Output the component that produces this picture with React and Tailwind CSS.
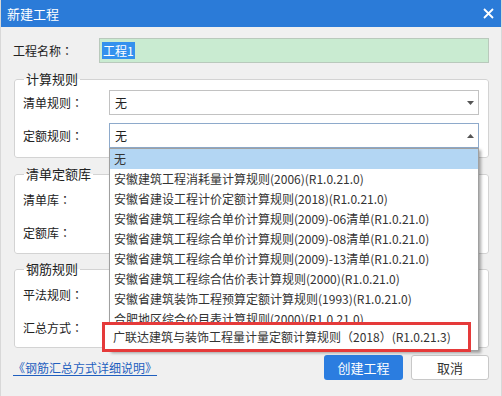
import React from 'react';

const rules = [
  '无',
  '安徽建筑工程消耗量计算规则(2006)(R1.0.21.0)',
  '安徽省建设工程计价定额计算规则(2018)(R1.0.21.0)',
  '安徽省建筑工程综合单价计算规则(2009)-06清单(R1.0.21.0)',
  '安徽省建筑工程综合单价计算规则(2009)-08清单(R1.0.21.0)',
  '安徽省建筑工程综合单价计算规则(2009)-13清单(R1.0.21.0)',
  '安徽省建筑工程综合估价表计算规则(2000)(R1.0.21.0)',
  '安徽省建筑装饰工程预算定额计算规则(1993)(R1.0.21.0)',
  '合肥地区综合价目表计算规则(2000)(R1.0.21.0)',
];

const Arrow = ({ up }) => (
  <svg width="7" height="4" viewBox="0 0 7 4" className="mr-[4px]">
    {up ? <path d="M0 4 L3.5 0 L7 4 Z" fill="#555" /> : <path d="M0 0 L3.5 4 L7 0 Z" fill="#555" />}
  </svg>
);

// centred full-width colon, as the dialog font draws it
const Label = ({ text }) => (
  <span className="w-[86px] shrink-0">
    {text}
    <span className="font-['Noto_Sans_CJK_TC',sans-serif]">：</span>
  </span>
);

const Group = ({ title, children, className = '' }) => (
  <fieldset className={`ml-px border border-[#d3d3d3] rounded-[3px] bg-white pl-2 pr-[9px] ${className}`}>
    <legend className="px-[2px] ml-[1px] text-[13px] leading-[16px] text-[#222]">{title}</legend>
    {children}
  </fieldset>
);

const Row = ({ label, children }) => (
  <div className="flex items-center h-[25px]">
    <Label text={label} />
    {children}
  </div>
);

export default function App() {
  return (
    <div className="w-[502px] h-[396px] bg-[#f0f0f0] border-x border-[#d8d8d8] flex flex-col font-['Noto_Sans_CJK_SC',sans-serif] text-[12px] text-[#222] overflow-hidden">
      <div className="h-[27px] shrink-0 bg-[#2b7bd8] flex items-center justify-between pl-[7px] pr-[8px] -mx-px">
        <span className="text-white text-[13px]">新建工程</span>
        <svg width="11" height="11" viewBox="0 0 11 11">
          <path d="M1 1 L10 10 M10 1 L1 10" stroke="#fff" strokeWidth="1.8" />
        </svg>
      </div>

      <div className="flex-1 pl-3 pr-[12px] flex flex-col">
        <div className="mt-[11px] flex items-center h-[25px]">
          <Label text="工程名称" />
          <div className="flex-1 h-full bg-[#c9ebd1] border border-[#b9c9bc] flex items-center pl-[2px]">
            <span className="bg-[#3391ee] text-white leading-[17px] px-px">工程1</span>
          </div>
        </div>

        <Group title="计算规则" className="mt-[8px] pb-[9px]">
          <div className="pt-[3px] flex flex-col gap-[8px]">
            <Row label="清单规则">
              <div className="flex-1 h-full border border-[#c2c2c2] bg-white flex items-center justify-between pl-[5px]">
                <span>无</span>
                <Arrow />
              </div>
            </Row>
            <Row label="定额规则">
              <div className="relative flex-1 h-full border border-[#8eaacb] bg-white flex items-center justify-between pl-[5px]">
                <span>无</span>
                <Arrow up />
                <div className="absolute z-10 left-[-1px] right-[-1px] top-[24px] border border-[#a0a0a0] bg-white shadow-[2px_2px_3px_rgba(0,0,0,0.35)] text-[#333]">
                  {rules.map((r, i) => (
                    <div
                      key={r}
                      className={`pl-[4px] leading-[20px] h-[20px] whitespace-nowrap ${i === 0 ? 'bg-[#b3d6f3]' : ''}`}
                    >
                      {r}
                    </div>
                  ))}
                  <div className="h-[21px]" />
                  <div className="absolute left-[-8px] top-[173px] w-[369px] h-[30px] border-[3px] border-[#e53a3a] bg-white flex items-center pl-[8px] whitespace-nowrap">
                    广联达建筑与装饰工程量计量定额计算规则（2018）(R1.0.21.3)
                  </div>
                </div>
              </div>
            </Row>
          </div>
        </Group>

        <Group title="清单定额库" className="mt-[8px] pb-[8px]">
          <div className="pt-[5px] flex flex-col gap-[8px]">
            <Row label="清单库" />
            <Row label="定额库" />
          </div>
        </Group>

        <Group title="钢筋规则" className="mt-[7px] pb-[7px]">
          <div className="pt-[5px] flex flex-col gap-[8px]">
            <Row label="平法规则" />
            <Row label="汇总方式" />
          </div>
        </Group>

        <div className="mt-[7px] flex items-center justify-between">
          <a href="#" className="text-[#1f5fbf] underline underline-offset-2">《钢筋汇总方式详细说明》</a>
          <div className="flex gap-[8px]">
            <button className="w-[79px] h-[25px] rounded-[3px] bg-[#2b7de0] text-white text-[13px]">创建工程</button>
            <button className="w-[78px] h-[25px] rounded-[3px] bg-white border border-[#c8c8c8] text-[13px] text-[#333]">取消</button>
          </div>
        </div>
      </div>
    </div>
  );
}
